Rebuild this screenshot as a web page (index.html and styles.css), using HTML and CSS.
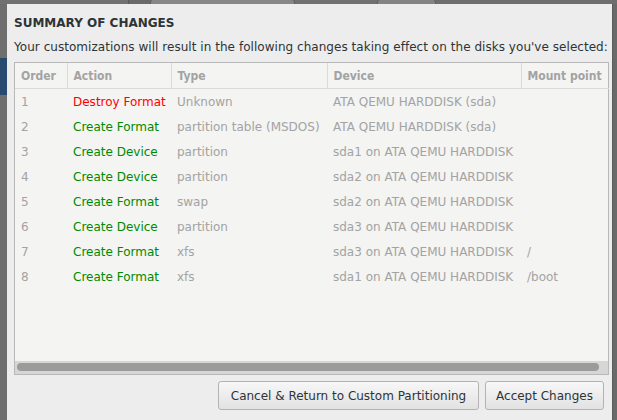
FILE: index.html
```html
<!DOCTYPE html>
<html>
<head>
<meta charset="utf-8">
<link rel="stylesheet" href="styles.css">
</head>
<body>
<div class="topbar">
  <div class="seg s1"></div>
  <div class="seg s2"></div>
  <div class="seg s3"></div>
  <div class="seg s4"></div>
  <div class="seg s5"></div>
  <div class="seg s6"></div>
</div>
<div class="main">
  <div class="leftstrip"><div class="blue"></div></div>
  <div class="dialog">
    <h1 class="title">SUMMARY OF CHANGES</h1>
    <p class="subtitle">Your customizations will result in the following changes taking effect on the disks you've selected:</p>
    <div class="tablebox">
      <table class="changes">
        <colgroup>
          <col class="c-order"><col class="c-action"><col class="c-type"><col class="c-device"><col class="c-mount">
        </colgroup>
        <thead>
          <tr><th>Order</th><th>Action</th><th>Type</th><th>Device</th><th class="last">Mount point</th></tr>
        </thead>
        <tbody>
          <tr><td>1</td><td class="destroy">Destroy Format</td><td>Unknown</td><td>ATA QEMU HARDDISK (sda)</td><td></td></tr>
          <tr><td>2</td><td class="create">Create Format</td><td>partition table (MSDOS)</td><td>ATA QEMU HARDDISK (sda)</td><td></td></tr>
          <tr><td>3</td><td class="create">Create Device</td><td>partition</td><td>sda1 on ATA QEMU HARDDISK</td><td></td></tr>
          <tr><td>4</td><td class="create">Create Device</td><td>partition</td><td>sda2 on ATA QEMU HARDDISK</td><td></td></tr>
          <tr><td>5</td><td class="create">Create Format</td><td>swap</td><td>sda2 on ATA QEMU HARDDISK</td><td></td></tr>
          <tr><td>6</td><td class="create">Create Device</td><td>partition</td><td>sda3 on ATA QEMU HARDDISK</td><td></td></tr>
          <tr><td>7</td><td class="create">Create Format</td><td>xfs</td><td>sda3 on ATA QEMU HARDDISK</td><td>/</td></tr>
          <tr><td>8</td><td class="create">Create Format</td><td>xfs</td><td>sda1 on ATA QEMU HARDDISK</td><td>/boot</td></tr>
        </tbody>
      </table>
      <div class="spacer"></div>
      <div class="hscroll"><div class="thumb"></div></div>
    </div>
    <div class="buttons">
      <button class="btn btn-cancel">Cancel &amp; Return to Custom Partitioning</button>
      <button class="btn btn-accept">Accept Changes</button>
    </div>
  </div>
  <div class="rightstrip"></div>
</div>
</body>
</html>
```

FILE: styles.css
```css
html, body {
  margin: 0;
  padding: 0;
}
body {
  width: 617px;
  height: 420px;
  overflow: hidden;
  background: #6e6e6e;
  font-family: "DejaVu Sans", sans-serif;
  font-size: 12px;
  color: #2e3436;
}
.topbar {
  display: flex;
  height: 4px;
  background: #6e6e6e;
}
.seg { height: 4px; }
.s1 { width: 128px; background: #717171; }
.s2 { width: 21px; background: #6a6a6a; border-left: 1px solid #5a5a5a; }
.s3 { width: 143px; background: #878787; border-left: 1px solid #5e5e5e; border-right: 1px solid #5e5e5e; border-radius: 3px 3px 0 0; }
.s4 { width: 82px; background: #717171; }
.s5 { width: 57px; background: #848484; border-left: 1px solid #5e5e5e; border-right: 1px solid #5e5e5e; border-radius: 3px 3px 0 0; }
.s6 { flex: 1; background: #6e6e6e; }

.main {
  display: flex;
  height: 416px;
}
.leftstrip {
  width: 7px;
  background: #6e6e6e;
}
.blue {
  margin-top: 54px;
  height: 37px;
  background: #294a6f;
}
.rightstrip {
  flex: 1;
  background: #6a6a6a;
  border-left: 1px solid #5c5c5c;
}
.dialog {
  width: 595px;
  padding: 0 3px 0 7px;
  background: #ededed;
  display: flex;
  flex-direction: column;
}
.title {
  margin: 12px 0 0 0;
  font-size: 12px;
  line-height: 14px;
  font-weight: bold;
  color: #2e3436;
}
.subtitle {
  margin: 9px 0 0 0;
  line-height: 16px;
  color: #2e3436;
  white-space: nowrap;
  letter-spacing: 0.04px;
}
.tablebox {
  margin-top: 7px;
  height: 311px;
  border: 1px solid #b8b8b8;
  background: #f4f4f2;
  display: flex;
  flex-direction: column;
}
.changes {
  border-collapse: collapse;
  table-layout: fixed;
  width: 594px;
}
.c-order { width: 52px; }
.c-action { width: 104px; }
.c-type { width: 156px; }
.c-device { width: 194px; }
.c-mount { width: 88px; }
.changes th {
  height: 25px;
  padding: 0 6px;
  text-align: left;
  font-family: "DejaVu Sans Condensed", "DejaVu Sans", sans-serif;
  font-stretch: condensed;
  font-weight: bold;
  color: #a3a3a3;
  border-bottom: 1px solid #dadad8;
  border-right: 1px solid #dadad8;
  white-space: nowrap;
  overflow: hidden;
}
.changes th.last { border-right: none; padding-right: 0; }
.changes td {
  height: 25px;
  padding: 0 6px;
  color: #a3a3a3;
  white-space: nowrap;
  overflow: hidden;
}
.changes td.destroy { color: #ff0000; }
.changes td.create { color: #008a00; }
.spacer { flex: 1; }
.hscroll {
  height: 13px;
  background: #d6d6d4;
  padding: 2px 9px 0 2px;
  box-sizing: border-box;
}
.thumb {
  height: 8px;
  border-radius: 4px;
  background: #9b9b9b;
}
.buttons {
  display: flex;
  justify-content: flex-end;
  gap: 6px;
  margin-top: 6px;
  padding-right: 5px;
}
.btn {
  height: 29px;
  padding: 0;
  font-family: "DejaVu Sans", sans-serif;
  font-size: 12px;
  color: #2e3436;
  white-space: nowrap;
  text-align: center;
  border: 1px solid #b3b3b3;
  border-radius: 3px;
  background: linear-gradient(#f7f7f7, #e2e2e2);
}
.btn-cancel { width: 261px; }
.btn-accept { width: 119px; }
```
